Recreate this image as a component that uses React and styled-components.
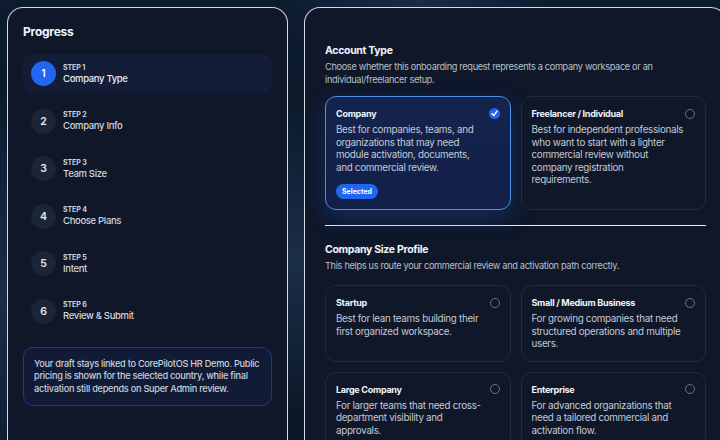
import React from "react";
import styled, { createGlobalStyle } from "styled-components";

const GlobalStyle = createGlobalStyle`
  html, body {
    margin: 0;
    padding: 0;
    width: 720px;
    height: 440px;
    overflow: hidden;
    background: #0c1828;
  }
  * { box-sizing: border-box; }
  body {
    font-family: Inter, "Noto Sans", sans-serif;
    -webkit-font-smoothing: antialiased;
  }
`;

const steps = [
  { n: 1, title: "Company Type" },
  { n: 2, title: "Company Info" },
  { n: 3, title: "Team Size" },
  { n: 4, title: "Choose Plans" },
  { n: 5, title: "Intent" },
  { n: 6, title: "Review & Submit" },
];

// descriptions kept as lines so the wrapping matches the design
const accountTypes = [
  {
    title: "Company",
    desc: ["Best for companies, teams, and", "organizations that may need", "module activation, documents,", "and commercial review."],
    selected: true,
  },
  {
    title: "Freelancer / Individual",
    desc: ["Best for independent professionals", "who want to start with a lighter", "commercial review without", "company registration", "requirements."],
  },
];

const sizes = [
  { title: "Startup", desc: ["Best for lean teams building their", "first organized workspace."] },
  { title: "Small / Medium Business", desc: ["For growing companies that need", "structured operations and multiple", "users."] },
  { title: "Large Company", desc: ["For larger teams that need cross-", "department visibility and", "approvals."] },
  { title: "Enterprise", desc: ["For advanced organizations that", "need a tailored commercial and", "activation flow."] },
];

const CheckIcon = () => (
  <svg width="11" height="11" viewBox="0 0 12 12">
    <circle cx="6" cy="6" r="6" fill="#2563eb" />
    <path d="M3.3 6.2 L5.2 8.2 L8.8 3.4" stroke="#fff" strokeWidth="1.5" fill="none" strokeLinecap="round" strokeLinejoin="round" />
  </svg>
);

const OptionCard = ({ title, desc, selected }) => (
  <Card $selected={selected}>
    <CardHead>
      <CardTitle>{title}</CardTitle>
      {selected ? <CheckIcon /> : <Radio />}
    </CardHead>
    <CardDesc>
      {desc.map((line) => (
        <Line key={line}>{line}</Line>
      ))}
    </CardDesc>
    {selected && <Badge>Selected</Badge>}
  </Card>
);

const App = () => {
  return (
    <>
      <GlobalStyle />
      <Page>
        <Sidebar>
          <SideTitle>Progress</SideTitle>
          <StepList>
            {steps.map((s) => (
              <StepRow key={s.n} $active={s.n === 1}>
                <StepNum $active={s.n === 1}>{s.n}</StepNum>
                <StepText>
                  <StepLabel>STEP {s.n}</StepLabel>
                  <StepTitle $active={s.n === 1}>{s.title}</StepTitle>
                </StepText>
              </StepRow>
            ))}
          </StepList>
          <InfoBox>
            Your draft stays linked to CorePilotOS HR Demo. Public pricing is shown for the
            selected country, while final activation still depends on Super Admin review.
          </InfoBox>
        </Sidebar>

        <Main>
          <Section>
            <SectionTitle>Account Type</SectionTitle>
            <SectionDesc>
              Choose whether this onboarding request represents a company workspace or an
              individual/freelancer setup.
            </SectionDesc>
            <CardGrid $gap="10px">
              {accountTypes.map((a) => (
                <OptionCard key={a.title} {...a} />
              ))}
            </CardGrid>
          </Section>
          <Section $last>
            <SectionTitle>Company Size Profile</SectionTitle>
            <SectionDesc>This helps us route your commercial review and activation path correctly.</SectionDesc>
            <CardGrid $gap="13px">
              {sizes.map((s) => (
                <OptionCard key={s.title} {...s} />
              ))}
            </CardGrid>
          </Section>
        </Main>
      </Page>
    </>
  );
};

export default App;

const Page = styled.div`
  width: 760px;
  height: 440px;
  padding: 7px;
  display: grid;
  grid-template-columns: 281px 423px;
  gap: 16px;
  align-items: start;
  background:
    radial-gradient(ellipse 120px 220px at 296px 260px, rgba(40, 64, 96, 0.55), transparent 70%),
    radial-gradient(ellipse 200px 120px at 420px 0px, rgba(40, 60, 90, 0.5), transparent 70%),
    radial-gradient(ellipse 80px 300px at 0px 300px, rgba(36, 60, 92, 0.6), transparent 70%),
    linear-gradient(180deg, #0d1b2e 0%, #0b1727 100%);
`;

const Panel = styled.div`
  background: #0f1729;
  border: 1px solid rgba(235, 240, 248, 0.9);
  border-radius: 16px;
  height: 460px;
`;

const Sidebar = styled(Panel)`
  padding: 16px 15px;
`;

const SideTitle = styled.div`
  color: #f1f5f9;
  font-size: 12px;
  font-weight: 700;
  letter-spacing: -0.02em;
  line-height: 16px;
  margin-bottom: 14px;
`;

const StepList = styled.div`
  display: flex;
  flex-direction: column;
  gap: 8.5px;
`;

const StepRow = styled.div`
  display: flex;
  align-items: center;
  gap: 7px;
  height: 39px;
  padding: 0 8px;
  border-radius: 9px;
  background: ${(p) => (p.$active ? "#131d38" : "transparent")};
`;

const StepNum = styled.div`
  width: 25px;
  height: 25px;
  border-radius: 50%;
  flex-shrink: 0;
  display: flex;
  align-items: center;
  justify-content: center;
  font-size: 10.5px;
  font-weight: 600;
  color: ${(p) => (p.$active ? "#ffffff" : "#e2e8f0")};
  background: ${(p) => (p.$active ? "#2166f3" : "#1c2536")};
`;

const StepText = styled.div`
  display: flex;
  flex-direction: column;
`;

const StepLabel = styled.div`
  font-size: 7px;
  font-weight: 700;
  color: #cbd2dc;
  letter-spacing: -0.01em;
  line-height: 9px;
`;

const StepTitle = styled.div`
  font-size: 9.5px;
  font-weight: 500;
  color: ${(p) => (p.$active ? "#e6ebf2" : "#cfd5de")};
  letter-spacing: -0.035em;
  line-height: 13px;
`;

const InfoBox = styled.div`
  margin-top: 16px;
  padding: 10px 10px;
  border: 1px solid #1f3a7e;
  border-radius: 10px;
  background: #111b35;
  color: #c9d0db;
  font-size: 9.2px;
  font-weight: 500;
  line-height: 12.5px;
  letter-spacing: -0.03em;
`;

const Main = styled(Panel)`
  padding: 35px 20px 0 20px;
`;

const Section = styled.div`
  padding: ${(p) => (p.$last ? "16px 0 0" : "0 0 15px")};
  border-bottom: ${(p) => (p.$last ? "none" : "1px solid #e6eaf0")};
`;

const SectionTitle = styled.div`
  color: #f1f5f9;
  font-size: 10.5px;
  font-weight: 700;
  letter-spacing: -0.03em;
  line-height: 15px;
`;

const SectionDesc = styled.div`
  margin-top: 2px;
  color: #b8c0cc;
  font-size: 9.2px;
  line-height: 13px;
  letter-spacing: -0.035em;
`;

const CardGrid = styled.div`
  margin-top: ${(p) => p.$gap};
  display: grid;
  grid-template-columns: 1fr 1fr;
  gap: 10px;
`;

const Card = styled.div`
  padding: 10px 10px 10px 10px;
  border-radius: 11px;
  border: 1px solid ${(p) => (p.$selected ? "#4b8fe6" : "#212b3c")};
  background: ${(p) =>
    p.$selected ? "linear-gradient(180deg, #15244d 0%, #122049 100%)" : "#0f1729"};
  box-shadow: ${(p) => (p.$selected ? "0 8px 22px rgba(30, 80, 190, 0.35)" : "none")};
  display: flex;
  flex-direction: column;
  align-items: flex-start;
`;

const CardHead = styled.div`
  width: 100%;
  display: flex;
  align-items: center;
  justify-content: space-between;
`;

const CardTitle = styled.div`
  color: #f1f5f9;
  font-size: 9px;
  font-weight: 700;
  letter-spacing: -0.03em;
  line-height: 13px;
`;

const Radio = styled.span`
  width: 10px;
  height: 10px;
  border-radius: 50%;
  border: 1px solid #6b7585;
`;

const CardDesc = styled.div`
  margin-top: 4px;
  color: #c3cad5;
  font-size: 9.8px;
  line-height: 12.5px;
  letter-spacing: -0.03em;
`;

const Line = styled.span`
  display: block;
  white-space: nowrap;
`;

const Badge = styled.span`
  margin-top: 10px;
  padding: 0 6px;
  height: 15px;
  display: inline-flex;
  align-items: center;
  border-radius: 8px;
  background: #1f66f0;
  color: #fff;
  font-size: 7px;
  font-weight: 700;
`;
